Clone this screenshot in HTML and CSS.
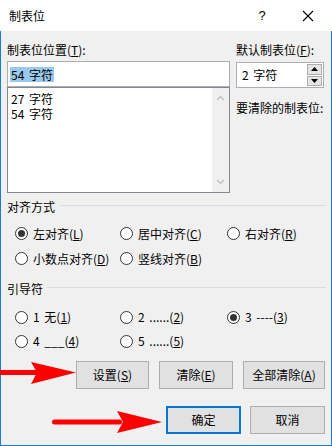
FILE: index.html
```html
<!DOCTYPE html>
<html lang="zh">
<head>
<meta charset="utf-8">
<link rel="stylesheet" href="styles.css">
</head>
<body>
<div class="window">
  <div class="titlebar">
    <span class="title">制表位</span>
    <span class="help">?</span>
    <span class="close"><svg width="12" height="12" viewBox="0 0 12 12"><path d="M1 1L11 11M11 1L1 11" stroke="#000" stroke-width="1.1" fill="none"/></svg></span>
  </div>
  <div class="content">
    <div class="top">
      <div class="col-left">
        <div class="label">制表位位置(<u>T</u>):</div>
        <div class="input"><span class="sel">54 字符</span></div>
        <div class="list">
          <div class="items"><div class="item">27 字符</div><div class="item">54 字符</div></div>
          <div class="scroll">
            <svg width="9" height="6" viewBox="0 0 9 6"><path d="M1 5L4.5 1.5L8 5" stroke="#c2c2c2" stroke-width="1.5" fill="none"/></svg>
            <svg width="9" height="6" viewBox="0 0 9 6"><path d="M1 1L4.5 4.5L8 1" stroke="#c2c2c2" stroke-width="1.5" fill="none"/></svg>
          </div>
        </div>
      </div>
      <div class="col-right">
        <div class="label">默认制表位(<u>F</u>):</div>
        <div class="spin">
          <span class="spin-text">2 字符</span>
          <div class="spin-btns">
            <div class="sbtn"><svg width="7" height="4" viewBox="0 0 7 4"><path d="M0 4L3.5 0L7 4Z" fill="#000"/></svg></div>
            <div class="sbtn"><svg width="7" height="4" viewBox="0 0 7 4"><path d="M0 0L3.5 4L7 0Z" fill="#000"/></svg></div>
          </div>
        </div>
        <div class="label clear-label">要清除的制表位:</div>
      </div>
    </div>

    <div class="group g1"><span>对齐方式</span><i class="line"></i></div>
    <div class="radios align-rows">
      <label class="radio"><i class="dot on"></i>左对齐(<u>L</u>)</label>
      <label class="radio"><i class="dot"></i>居中对齐(<u>C</u>)</label>
      <label class="radio"><i class="dot"></i>右对齐(<u>R</u>)</label>
      <label class="radio"><i class="dot"></i>小数点对齐(<u>D</u>)</label>
      <label class="radio"><i class="dot"></i>竖线对齐(<u>B</u>)</label>
    </div>

    <div class="group g2"><span>引导符</span><i class="line"></i></div>
    <div class="radios leader-rows">
      <label class="radio"><i class="dot"></i>1 无(<u>1</u>)</label>
      <label class="radio"><i class="dot"></i>2 ......(<u>2</u>)</label>
      <label class="radio"><i class="dot on"></i>3 ----(<u>3</u>)</label>
      <label class="radio"><i class="dot"></i>4 ___(<u>4</u>)</label>
      <label class="radio"><i class="dot"></i>5 ......(<u>5</u>)</label>
    </div>

    <div class="btn-row row1">
      <button class="btn w73">设置(<u>S</u>)</button>
      <button class="btn w74">清除(<u>E</u>)</button>
      <button class="btn w82">全部清除(<u>A</u>)</button>
    </div>
    <div class="btn-row row2">
      <button class="btn w75 primary">确定</button>
      <button class="btn w75">取消</button>
    </div>
  </div>

  <svg class="arrows" width="332" height="446" viewBox="0 0 332 446">
    <rect x="0" y="370" width="38" height="5" fill="#f00"/>
    <path d="M31 362 L76 372.5 L31 384 L37 372.5 Z" fill="#f00"/>
    <rect x="52" y="419.5" width="70" height="5" rx="2.5" fill="#f00"/>
    <path d="M117 411 L162 422 L117 433 L123 422 Z" fill="#f00"/>
  </svg>
</div>
</body>
</html>
```

FILE: styles.css
```css
* { box-sizing: border-box; }
html, body { margin: 0; padding: 0; }
body {
  width: 332px;
  height: 446px;
  overflow: hidden;
  font-family: "Noto Sans CJK SC", "Microsoft YaHei", sans-serif;
  font-size: 12px;
  word-spacing: 2px;
  color: #000;
  background: #f0f0f0;
}
u { text-decoration: underline; text-underline-offset: 1px; }

.window {
  position: relative;
  width: 332px;
  height: 446px;
  background: #f0f0f0;
}

.titlebar {
  height: 31px;
  background: #fff;
  display: flex;
  align-items: center;
  padding-left: 9px;
  line-height: 16px;
}
.title { flex: 1; font-size: 12px; }
.help { width: 10px; text-align: center; margin-right: 35px; font-size: 13px; font-family: "Liberation Sans", sans-serif; }
.close { display: flex; width: 12px; margin-right: 18px; }

.content {
  height: 415px;
  border: 1px solid #1c7cd5;
  border-top: none;
  padding: 11px 6px 0 6px;
}

.top {
  display: grid;
  grid-template-columns: 223px 88px;
  column-gap: 6px;
}
.label { line-height: 16px; height: 16px; white-space: nowrap; word-spacing: 0; }
.col-left .label { margin-bottom: 3px; }
.col-right .label { margin-bottom: 4px; }
.col-right .clear-label { margin-top: 12px; }

.input {
  height: 26px;
  background: #fff;
  border: 1px solid #abadb3;
  padding: 3px 2px;
  display: flex;
  align-items: center;
}
.sel {
  background: #99c9ef;
  line-height: 15px;
  height: 15px;
  padding: 0 1px;
}

.list {
  height: 106px;
  background: #fff;
  border: 1px solid #828790;
  display: flex;
}
.items { flex: 1; padding: 3px 3px; }
.item { line-height: 15px; height: 15px; overflow: hidden; }
.scroll {
  width: 17px;
  background: #f0f0f0;
  display: flex;
  flex-direction: column;
  justify-content: space-between;
  align-items: center;
  padding: 7px 0 7px;
}

.spin {
  height: 26px;
  background: #fff;
  border: 1px solid #abadb3;
  display: flex;
  align-items: center;
  padding-left: 5px;
}
.spin-text { flex: 1; line-height: 16px; }
.spin-btns {
  width: 15px;
  height: 22px;
  margin-right: 1px;
  display: flex;
  flex-direction: column;
  gap: 1px;
}
.sbtn {
  flex: 1;
  background: #e5e5e5;
  border: 1px solid #adadad;
  display: flex;
  align-items: center;
  justify-content: center;
}

.group {
  display: flex;
  align-items: center;
  height: 16px;
  line-height: 16px;
}
.group span { white-space: nowrap; margin-right: 5px; }
.group .line {
  flex: 1;
  height: 1px;
  background: #dcdcdc;
  margin-right: -1px;
  margin-bottom: 4px;
}
.g1 { margin-top: 6px; }
.g2 { margin-top: 10px; }
.g2 span { margin-right: 4px; }

.radios {
  display: grid;
  grid-template-columns: 105px 107px auto;
  padding-left: 8px;
}
.align-rows { margin-top: 6px; grid-auto-rows: 25px; }
.leader-rows { margin-top: 8px; grid-auto-rows: 24px; }
.radio {
  display: flex;
  align-items: center;
  white-space: pre;
  line-height: 16px;
}
.dot {
  width: 13px;
  height: 13px;
  border: 1px solid #333;
  border-radius: 50%;
  background: #fff;
  margin-right: 5px;
  display: flex;
  align-items: center;
  justify-content: center;
  flex: none;
}
.dot.on::after {
  content: "";
  width: 7px;
  height: 7px;
  border-radius: 50%;
  background: #333;
}

.btn-row {
  display: flex;
  justify-content: flex-end;
}
.row1 { margin-top: 8px; gap: 10px; }
.row2 { margin-top: 17px; gap: 9px; }
.btn {
  height: 28px;
  background: #e1e1e1;
  border: 1px solid #adadad;
  font-family: inherit;
  font-size: 12px;
  color: #000;
  padding: 0;
  line-height: 16px;
}
.btn.primary { border: 2px solid #0078d7; }
.w73 { width: 73px; }
.w74 { width: 74px; }
.w75 { width: 75px; }
.w82 { width: 82px; }

.arrows {
  position: absolute;
  left: 0;
  top: 0;
  pointer-events: none;
}
```
